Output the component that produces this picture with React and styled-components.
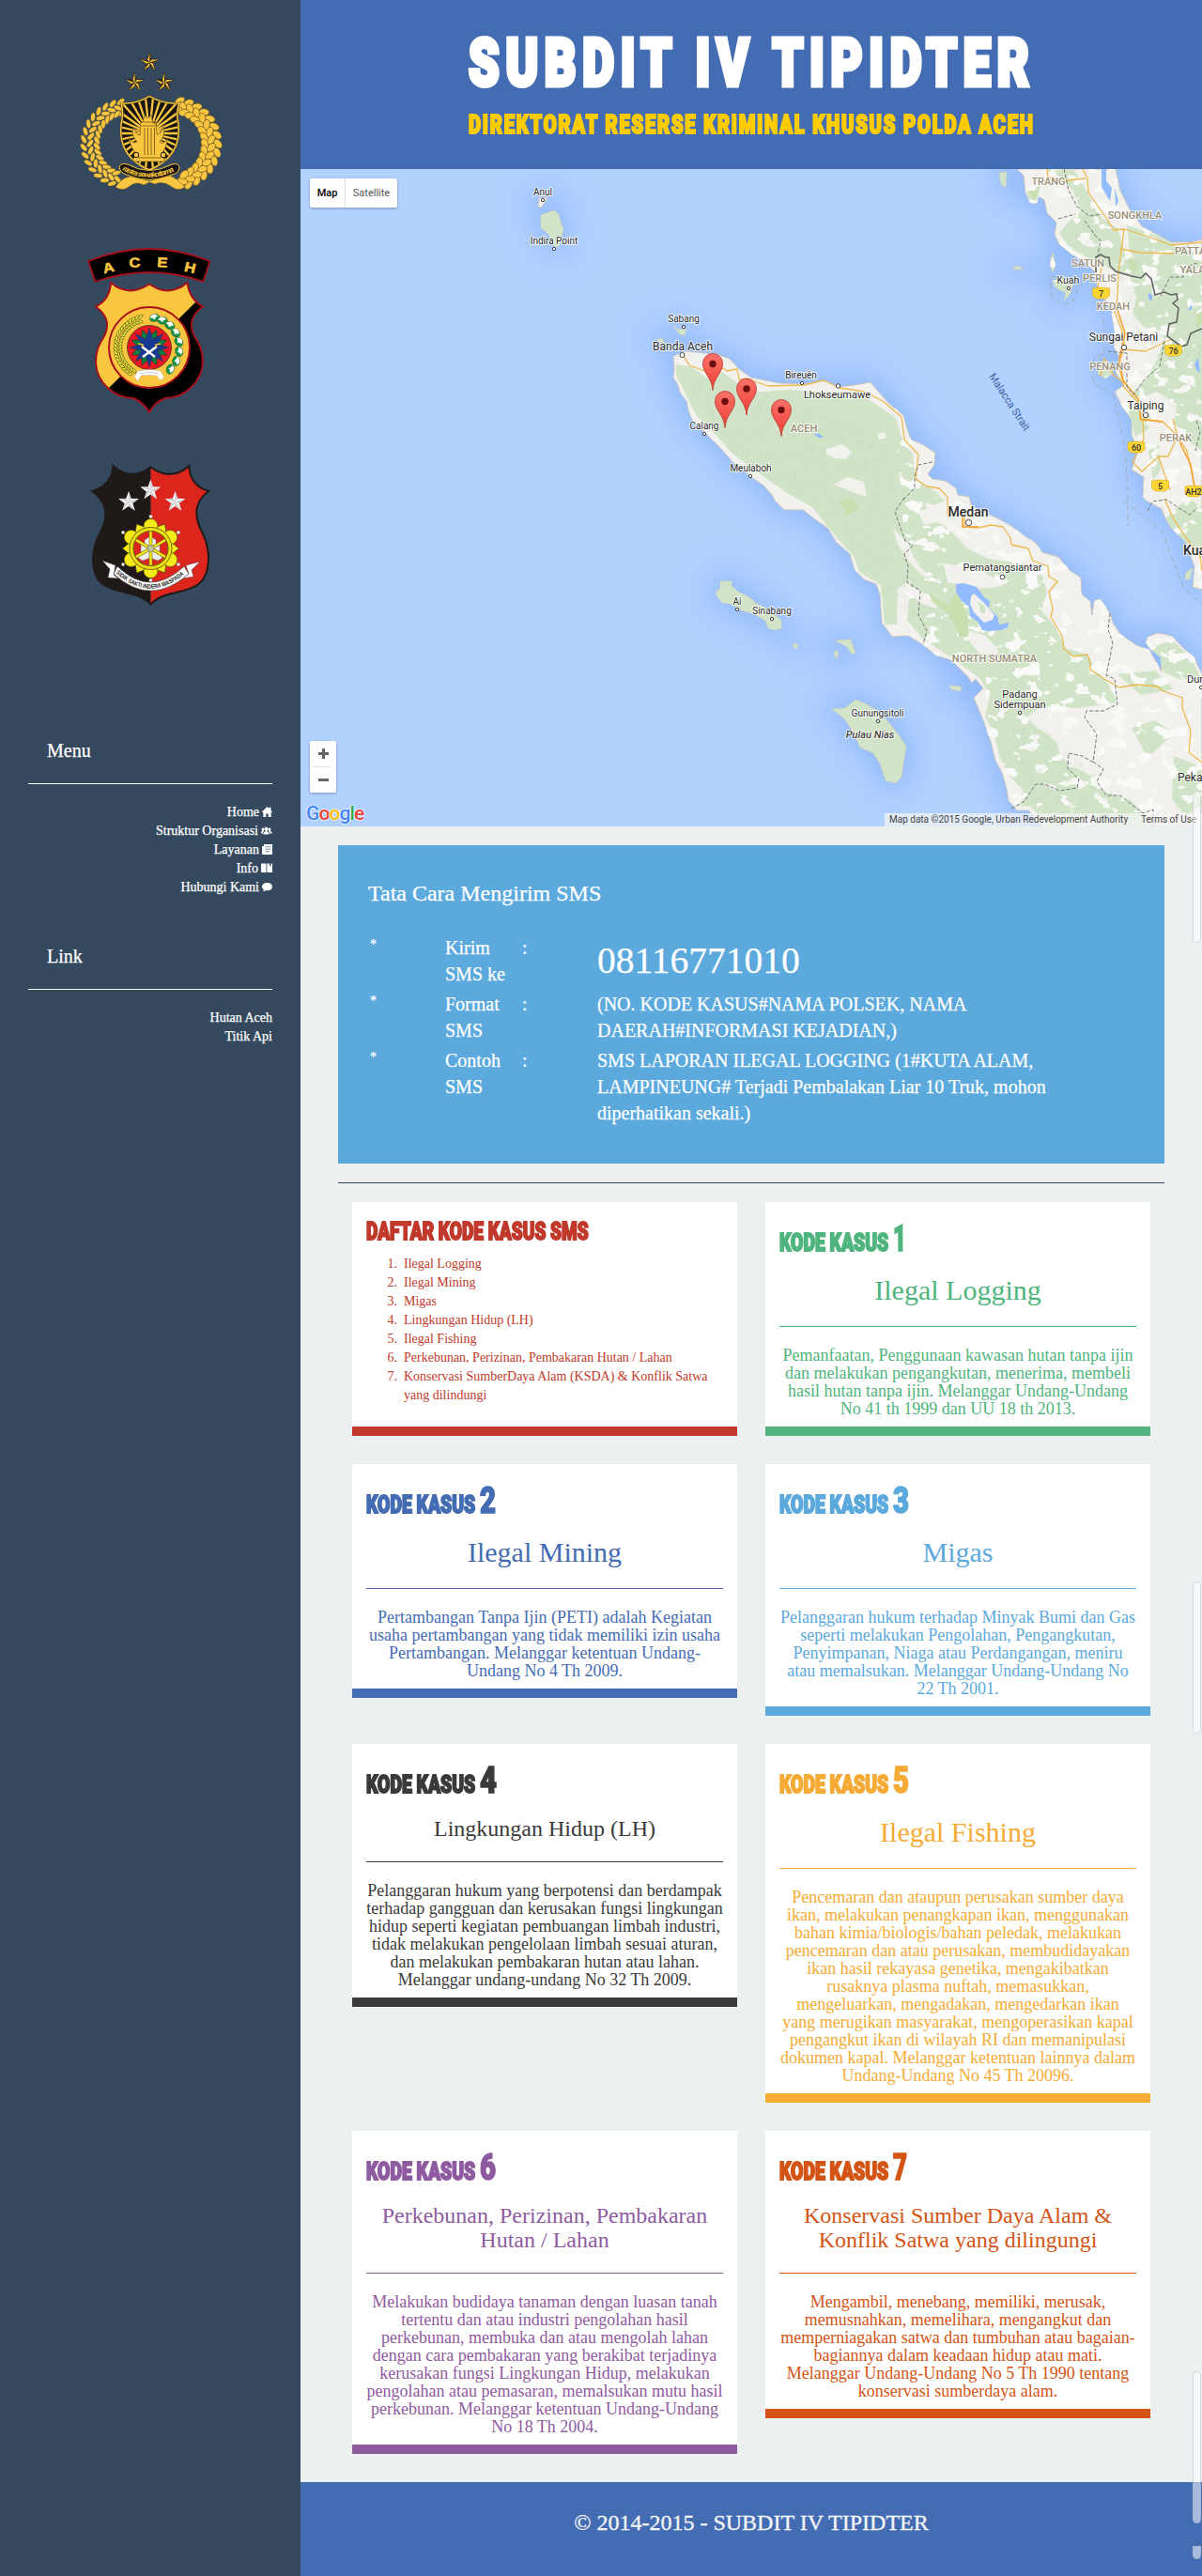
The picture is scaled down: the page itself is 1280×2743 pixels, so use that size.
import React, { useLayoutEffect, useRef, useState } from "react";
import styled, { createGlobalStyle } from "styled-components";

const serif = '"Liberation Serif", "Times New Roman", serif';
const sans = 'Roboto, "Liberation Sans", sans-serif';

const GlobalStyle = createGlobalStyle`
  * { box-sizing: border-box; }
  body { margin: 0; background: #ecf0f1; font-family: ${serif}; font-size: 14px; line-height: 20px; }
  h1, h2, h3, p, ol, ul { margin: 0; padding: 0; font-weight: 400; }
`;

/* ---------- page frame ---------- */
const Page = styled.div`
  position: relative;
  display: grid;
  grid-template-columns: 320px 960px;
  width: 1280px;
  height: 2743px;
  overflow: hidden;
`;
const Sidebar = styled.aside`
  background: #34495e;
  color: #fff;
  padding: 50px 30px 0;
`;
const Main = styled.main`
  display: flex;
  flex-direction: column;
  background: #ecf0f1;
`;

/* ---------- sidebar ---------- */
const Logos = styled.div`
  display: flex;
  flex-direction: column;
  align-items: center;
  height: 598px;
`;
const Crest = styled.svg`
  display: block;
  flex: none;
  width: ${(p) => p.$w}px;
  height: ${(p) => p.$h}px;
  margin-top: ${(p) => p.$gap || 0}px;
`;
const NavGroup = styled.nav`
  padding-top: ${(p) => p.$top}px;
`;
const NavTitle = styled.h2`
  font-size: 20px;
  line-height: 22px;
  padding-left: 20px;
  padding-bottom: 24px;
  border-bottom: 1px solid #fff;
  -webkit-text-stroke: 0.25px currentColor;
`;
const NavList = styled.ul`
  list-style: none;
  padding-top: ${(p) => p.$pad}px;
  text-align: right;
  -webkit-text-stroke: 0.25px currentColor;
`;
const NavItem = styled.li`
  display: flex;
  justify-content: flex-end;
  align-items: center;
  gap: 3px;
  height: 20px;
  line-height: 20px;
`;
const NavIcon = styled.svg`
  height: 11px;
  width: ${(p) => p.$w || 11}px;
  margin-bottom: 1px;
`;

/* ---------- header / footer ---------- */
const Header = styled.header`
  height: 180px;
  padding: 27px 0 0 179px;
  background: #446cb3;
`;
const FitBox = styled.span`
  display: block;
  width: ${(p) => p.$width}px;
  height: ${(p) => p.$line}px;
  line-height: ${(p) => p.$line}px;
  font-family: ${sans};
  font-weight: 900;
  font-size: ${(p) => p.$size}px;
  letter-spacing: ${(p) => p.$track || 0}px;
  color: ${(p) => p.$color || "inherit"};
  -webkit-text-stroke: ${(p) => p.$stroke || 0.8}px currentColor;
  white-space: nowrap;
`;
const FitInner = styled.span`
  display: inline-block;
  transform-origin: 0 50%;
`;
const Footer = styled.footer`
  height: 100px;
  margin-top: auto;
  padding-top: 23px;
  background: #446cb3;
  color: #f4f6f7;
  font-size: 24px;
  line-height: 40px;
  text-align: center;
  -webkit-text-stroke: 0.3px currentColor;
`;

function FitText({ children, ...box }) {
  const ref = useRef(null);
  const [scale, setScale] = useState(1);
  useLayoutEffect(() => {
    const natural = ref.current.offsetWidth - (box.$track || 0);
    setScale(box.$width / natural);
  }, [children, box.$width, box.$track]);
  return (
    <FitBox {...box}>
      <FitInner ref={ref} style={{ transform: `scaleX(${scale})` }}>{children}</FitInner>
    </FitBox>
  );
}

/* ---------- map ---------- */
const MapFrame = styled.section`
  position: relative;
  height: 700px;
  overflow: hidden;
  background: #b1d1ff;
  font-family: ${sans};
`;
const MapDrawing = styled.svg`
  display: block;
  width: 960px;
  height: 700px;
  font-family: ${sans};
`;
const MapTypes = styled.div`
  position: absolute;
  left: 10px;
  top: 10px;
  display: flex;
  height: 31px;
  background: #fff;
  border-radius: 2px;
  box-shadow: 0 1px 3px rgba(0, 0, 0, 0.3);
  font-size: 11px;
  line-height: 31px;
`;
const MapType = styled.span`
  width: ${(p) => p.$w}px;
  text-align: center;
  color: ${(p) => (p.$on ? "#000" : "#565656")};
  font-weight: ${(p) => (p.$on ? 500 : 400)};
  border-left: ${(p) => (p.$on ? 0 : 1)}px solid #e0e0e0;
`;
const ZoomControl = styled.div`
  position: absolute;
  left: 10px;
  top: 609px;
  width: 28px;
  height: 55px;
  background: #fff;
  border-radius: 2px;
  box-shadow: 0 1px 3px rgba(0, 0, 0, 0.3);
`;
const Google = styled.div`
  position: absolute;
  left: 6px;
  top: 674px;
  font: 500 21px/24px ${sans};
  letter-spacing: -0.9px;
  text-shadow: 0 0 2px #fff, 0 0 2px #fff, 0 0 1px #fff;
`;
const Tint = styled.span`
  color: ${(p) => p.$c};
`;
const Credits = styled.div`
  position: absolute;
  right: 0;
  bottom: 0;
  display: flex;
  height: 14px;
  width: 338px;
  background: rgba(245, 245, 245, 0.72);
  color: #444;
  font-size: 10px;
  line-height: 14px;
  white-space: nowrap;
`;
const Credit = styled.span`
  width: ${(p) => p.$w}px;
  padding-left: ${(p) => p.$pad}px;
`;

/* ---------- sms panel ---------- */
const Body = styled.div`
  padding: 20px 40px 0;
`;
const SmsPanel = styled.section`
  height: 339px;
  padding: 38px 32px 0;
  background: #5ba9dd;
  color: #fff;
  -webkit-text-stroke: 0.25px currentColor;
`;
const SmsTitle = styled.h2`
  font-size: 24px;
  line-height: 26px;
  margin-bottom: 31px;
`;
const SmsRow = styled.div`
  display: grid;
  grid-template-columns: 82px 82px 80px 500px;
  margin-top: ${(p) => (p.$first ? 0 : 4)}px;
  font-size: 20px;
  line-height: 28px;
`;
const Bullet = styled.span`
  padding-left: 2px;
  font-size: 14px;
  line-height: 22px;
`;
const Label = styled.span`
  width: 70px;
  white-space: pre-line;
`;
const Value = styled.span`
  font-size: ${(p) => (p.$big ? 39.5 : 20)}px;
  line-height: ${(p) => (p.$big ? 56 : 28)}px;
`;
const Rule = styled.div`
  height: 1px;
  margin: 20px 0;
  background: #34495e;
`;

/* ---------- cards ---------- */
const Cards = styled.div`
  display: grid;
  grid-template-columns: 410px 410px;
  gap: 30px;
  padding: 0 15px;
  align-items: start;
`;
const Card = styled.article`
  min-height: 249px;
  padding: 0 15px 9px;
  background: #fff;
  color: ${(p) => p.$color};
  border-bottom: 10px solid ${(p) => p.$color};
`;
const CardCode = styled.div`
  display: flex;
  gap: 5px;
  align-items: flex-end;
  height: 77px;
  padding-bottom: 18px;
`;
const CardTitle = styled.h3`
  font-size: ${(p) => (p.$small ? 24 : 30)}px;
  line-height: ${(p) => (p.$small ? 26 : 33)}px;
  text-align: center;
`;
const CardRule = styled.div`
  height: 1px;
  margin: 22px 0 21px;
  background: currentColor;
`;
const CardText = styled.p`
  font-size: 18px;
  line-height: 19px;
  text-align: center;
`;
const ListHead = styled.div`
  padding-top: 15px;
  height: 56px;
`;
const CodeList = styled.ol`
  padding-left: 40px;
  font-size: 14px;
  line-height: 20px;
`;
const CodeItem = styled.li`
  &::marker {
    content: counter(list-item) ".\\00a0\\00a0";
  }
`;
const ScrollThumb = styled.i`
  position: absolute;
  left: 1270px;
  top: ${(p) => p.$top}px;
  width: 9px;
  height: ${(p) => p.$h}px;
  border: 1px solid rgba(150, 160, 165, 0.35);
  border-radius: ${(p) => (p.$cut ? "0 0 5px 5px" : "5px")};
  background: rgba(255, 255, 255, 0.55);
`;

/* ---------- drawings ---------- */
const starPoints = (cx, cy, r, inner = 0.4, n = 5) =>
  Array.from({ length: n * 2 }, (_, i) => {
    const a = -Math.PI / 2 + (i * Math.PI) / n;
    const q = i % 2 ? r * inner : r;
    return `${(cx + q * Math.cos(a)).toFixed(2)},${(cy + q * Math.sin(a)).toFixed(2)}`;
  }).join(" ");

const halfStar = (cx, cy, r) =>
  Array.from({ length: 5 }, (_, k) => {
    const a = -Math.PI / 2 + (k * 2 * Math.PI) / 5;
    const b = a + Math.PI / 5;
    return `M${cx},${cy}L${cx + r * Math.cos(a)},${cy + r * Math.sin(a)}L${cx + r * 0.4 * Math.cos(b)},${cy + r * 0.4 * Math.sin(b)}Z`;
  }).join("");

function Leaves({ cx, cy, rows, from, to, n, l, w, fill, stroke, spread = 28, sw = 0.5 }) {
  const out = [];
  rows.forEach(([rx, ry, tilt], r) => {
    for (let i = 0; i < n; i++) {
      const deg = from + ((to - from) * (i + (r % 2) * 0.5)) / n;
      const a = (deg * Math.PI) / 180;
      const x = cx + rx * Math.cos(a);
      const y = cy + ry * Math.sin(a);
      out.push(
        <ellipse key={`${r}-${i}`} cx={x} cy={y} rx={l} ry={w} fill={fill} stroke={stroke} strokeWidth={sw}
          transform={`rotate(${deg + 90 + tilt * spread} ${x} ${y})`} />
      );
    }
  });
  return <g>{out}</g>;
}

const gold = "#fbc63f";

function PoliceCrest() {
  const shield = "M129,110 Q145,111 159,102.500 Q174,111 191,110 Q187,120 190,132 C193,158 178,173 159,181 C140,173 126,158 129,132 Q132,120 129,110Z";
  return (
    <Crest $w={160} $h={156} viewBox="80 50 160 156">
      {[[159.3, 66.500], [143.5, 88], [175, 88]].map(([x, y]) => (
        <g key={x}>
          <polygon points={starPoints(x, y, 11, 0.42)} fill="#1c1a17" />
          <polygon points={starPoints(x, y, 9.800, 0.38)} fill={gold} />
          <path d={halfStar(x, y, 9)} fill="#2a2416" />
        </g>
      ))}
      <Leaves cx={134} cy={153} rows={[[45, 45, -1], [38, 39, 1], [31, 33, -1]]} from={263} to={98} n={15} l={4.8} w={2.4} fill={gold} stroke="#4b4630" spread={34} />
      <Leaves cx={185} cy={153} rows={[[47, 46, -1], [40, 41, 1], [33, 35, -0.6]]} from={-82} to={82} n={14} l={5.600} w={3.600} fill={gold} stroke="#6d5a25" sw={0.7} spread={40} />
      <clipPath id="shieldClip"><path d={shield} /></clipPath>
      <path d={shield} fill="#171512" />
      <g clipPath="url(#shieldClip)" stroke={gold} strokeWidth="2.300">
        {Array.from({ length: 30 }, (_, i) => {
          const a = (i * 12 * Math.PI) / 180;
          return <line key={i} x1="159" y1="142" x2={159 + 50 * Math.cos(a)} y2={142 + 50 * Math.sin(a)} />;
        })}
      </g>
      <path d={shield} fill="none" stroke="#55491f" strokeWidth="2.400" />
      <path d={shield} fill="none" stroke={gold} strokeWidth="1.400" />
      <path d="M143,172 h32 v-3 l-4,-3 q6,-8 8,-19 q-6,8 -9,4 q7,-8 4,-16 q-3,9 -7,8 l-1,-13 q-3,6 -5,-8 q-4,7 -7,0 q-2,10 -4,8 l-1,14 q-4,0 -7,-9 q-3,9 4,16 q-3,3 -9,-4 q2,10 9,19 l-5,3z" fill={gold} stroke="#4b3d10" strokeWidth=".6" />
      <path d="M154,136V165M157.500,136V165M161,136V165M164.500,136V165M150,130h19M151,134h17M147,168h25" stroke="#6a5410" strokeWidth=".8" />
      <circle cx="145" cy="165" r="2.800" fill={gold} stroke="#171512" />
      <circle cx="174" cy="165" r="2.800" fill={gold} stroke="#171512" />
      <path d="M127,178 Q128,173 136,175 Q159,188 183,175 Q191,173 191,179 Q190,185 183,186 Q159,197 135,186 Q128,184 127,178Z" fill="#171512" stroke={gold} strokeWidth="1" />
      <path id="motto1" d="M130,181 Q159,197 190,180" fill="none" />
      <text fontFamily='"Liberation Sans", sans-serif' fontStyle="italic" fontSize="8" fontWeight="700" fill={gold}>
        <textPath href="#motto1" textLength="58">rastra sewakottama</textPath>
      </text>
      <path d="M123,199 Q131,188 139,188 Q150,190 159,193 Q168,190 181,187 Q189,190 197,199 Q190,204 183,199 Q173,192 165,196 L159,194 L153,197 Q145,192 137,199 Q130,204 123,199Z" fill={gold} stroke="#7b6425" strokeWidth=".5" />
    </Crest>
  );
}

function AcehCrest() {
  const shield = "M118,301 Q137,317 159,302.500 Q180,317 199.500,301 Q202,319 216,326.500 C203,336 201,346 207,358 C213,367 216,374 216,386 C215,408 195,424 176,424 Q165,428 159,439 Q152,428 142,424 C122,424 103,408 102,386 C102,374 105,367 111,358 C117,346 115,336 102,326.500 Q117,319 118,301Z";
  return (
    <Crest $w={140} $h={184} $gap={54} viewBox="90 260 140 184">
      <path d="M94,278 Q159,252 223.500,278 L216.500,300 Q159,280 101.500,300Z" fill="#000" stroke="#a5101c" strokeWidth="1.800" />
      {[["A", 115.500, 285, -13], ["C", 143.500, 279.500, -4], ["E", 173, 279.500, 4], ["H", 202.500, 285, 13]].map(([t, x, y, r]) => (
        <text key={t} transform={`translate(${x} ${y}) rotate(${r}) scale(1.150 1)`} y="5" textAnchor="middle" fontFamily='"Liberation Sans", sans-serif' fontSize="14.500" fontWeight="700" fill={gold} stroke={gold} strokeWidth=".5">{t}</text>
      ))}
      <clipPath id="acehClip"><path d={shield} /></clipPath>
      <g clipPath="url(#acehClip)">
        <rect x="95" y="295" width="130" height="150" fill={gold} />
        <path d="M208,322 L116,413 L116,445 H225 V315Z" fill="#000" />
      </g>
      <path d={shield} fill="none" stroke="#a5101c" strokeWidth="2" />
      <circle cx="159" cy="370" r="43" fill={gold} stroke="#a5101c" strokeWidth="2" />
      <Leaves cx={159} cy={370} rows={[[36, 34, -1], [31, 29, 1]]} from={255} to={118} n={21} l={3} w={1.300} fill="#f6f33a" stroke="#3d4517" sw={0.6} />
      {[-80, -64, -47, -29, -11, 8, 27, 46].map((d) => {
        const a = (d * Math.PI) / 180;
        const x = 159 + 32 * Math.cos(a);
        const y = 370 + 32 * Math.sin(a);
        return (
          <g key={d} transform={`rotate(${d + 65} ${x} ${y})`}>
            <ellipse cx={x} cy={y} rx="5.300" ry="4" fill="#159447" stroke="#16572f" strokeWidth=".5" />
            <path d={`M${x - 5},${y - 1} q5,-6 9,0 q-3,0 -4,3 q-2,-3 -5,-3z`} fill="#fff" />
          </g>
        );
      })}
      <circle cx="159" cy="370" r="23.500" fill="#ea1820" stroke="#3e3427" strokeWidth=".8" />
      <polygon points={starPoints(159, 370, 20.500, 0.58, 8)} fill="#087b43" stroke="#54191c" strokeWidth=".5" transform="rotate(22.500 159 370)" />
      <polygon points={starPoints(159, 370, 21, 0.45, 8)} fill="#17398f" stroke="#3e2744" strokeWidth=".5" />
      <path d="M151,369 L165,380 M167,369 L152,380" stroke="#fff" strokeWidth="2.400" />
      <path d="M147,366 l5,1 v3 M171,366 l-5,1 v3" stroke={gold} strokeWidth="1.500" fill="none" />
      <path d="M143,401 l4,-6 q12,-3 24,0 l4,7 l-5,3 l-3,-5 q-9,-1 -17,0 l-3,6z" fill="#fff" stroke="#b4aca0" strokeWidth=".5" />
      <path d="M149,398 q10,-3 20,0" stroke="#8a8a8a" strokeWidth=".8" strokeDasharray="1.500 1" fill="none" />
    </Crest>
  );
}

function ReserseCrest() {
  const shield = "M120.500,496 Q139,513 160.500,497.500 Q182,513 201.500,496 Q202,517 222,523 C208,534 207,546 212,560 C218,572 222,580 222,596 C221,640 180,622 160.500,643.500 C141,622 99,640 99,596 C99,580 105,572 110,560 C115,546 113,534 98,523 Q119,517 120.500,496Z";
  return (
    <Crest $w={140} $h={158} $gap={46} viewBox="90 490 140 158">
      <clipPath id="resClip"><path d={shield} /></clipPath>
      <g clipPath="url(#resClip)">
        <rect x="90" y="490" width="70.500" height="158" fill="#1f1a18" />
        <rect x="160.500" y="490" width="70" height="158" fill="#db251d" />
      </g>
      <path d={shield} fill="none" stroke="#211a18" strokeWidth="2" />
      {[[137, 534.500], [160.300, 522], [186.500, 534.500]].map(([x, y]) => (
        <g key={x}>
          <polygon points={starPoints(x, y, 11.500)} fill="#f6f6f6" />
          <path d={halfStar(x, y, 11)} fill="#c9c9c9" />
        </g>
      ))}
      {Array.from({ length: 6 }, (_, i) => {
        const a = ((i * 60 - 90) * Math.PI) / 180;
        return <circle key={i} cx={160.500 + 34 * Math.cos(a)} cy={584 + 34 * Math.sin(a)} r="1.800" fill="#fff" stroke="#777" strokeWidth=".4" />;
      })}
      <polygon points={starPoints(160.500, 584, 30, 0.78, 12)} fill="#f5ea18" stroke="#514d0c" strokeWidth=".8" />
      {Array.from({ length: 6 }, (_, i) => {
        const a = ((i * 60 - 90) * Math.PI) / 180;
        return <circle key={i} cx={160.500 + 24 * Math.cos(a)} cy={584 + 24 * Math.sin(a)} r="7.500" fill="#f5ea18" stroke="#514d0c" strokeWidth=".6" />;
      })}
      <circle cx="160.500" cy="584" r="22.500" fill="#eedf12" stroke="#6d6712" />
      <circle cx="160.500" cy="584" r="18.500" fill="#db251d" stroke="#6d6712" strokeWidth="1.200" />
      <path d="M150,590 v-10 h4 v-5 l6,-4 6,4 v5 h4 v10 l3,4 -5,3 -8,-3 -8,3 -5,-3z" fill="#eee" stroke="#777" strokeWidth=".5" />
      {Array.from({ length: 6 }, (_, i) => {
        const a = Math.PI / 2 + (i * Math.PI) / 3;
        return (
          <g key={i}>
            <line x1="160.500" y1="584" x2={160.500 + 18 * Math.cos(a)} y2={584 + 18 * Math.sin(a)} stroke="#6d6712" strokeWidth="3.600" />
            <line x1="160.500" y1="584" x2={160.500 + 18 * Math.cos(a)} y2={584 + 18 * Math.sin(a)} stroke="#f5ea18" strokeWidth="2.400" />
          </g>
        );
      })}
      <circle cx="160.500" cy="584" r="3.500" fill="#c4c29b" stroke="#666" strokeWidth=".6" />
      <path d="M109,597 L123,602 L121,612 L126,616 L115,615 L117,606Z M213,598 L198,602 L201,611 L194,616 L206,614 L204,607Z" fill="#fff" stroke="#444" strokeWidth=".5" />
      <path d="M125,603 Q160,637 196,603 L201,611 Q160,647 121,611Z" fill="#fff" stroke="#333" strokeWidth=".6" />
      <path id="motto2" d="M123.500,610 Q160,644 199,609" fill="none" />
      <text fontFamily='"Liberation Sans", sans-serif' fontSize="6.500" fontWeight="700" fill="#222">
        <textPath href="#motto2" textLength="81" lengthAdjust="spacingAndGlyphs">SIDIK SAKTI INDERA WASPADA</textPath>
      </text>
    </Crest>
  );
}

/* ---------- map data ---------- */
const sumatra = "M717,379 L730,374 763,377 777,382 787,393 800,402 830,408 857,409 877,405 893,412 910,410 927,407 938,420 947,430 962,442 966,456 970,468 982,473 996,482 995,495 988,505 993,510 1007,512 1018,520 1020,527 1032,529 1034,537 1040,542 1063,552 1077,560 1090,570 1103,578 1110,588 1127,593 1140,608 1151,615 1152,633 1161,640 1163,655 1165,640 1172,638 1182,653 1185,663 1193,675 1210,687 1224,692 1237,715 1236,700 1224,690 1220,684 1222,678 1233,674 1248,677 1260,690 1272,700 1275,708 1280,717 1280,880 1110,880 1103,873 1095,863 1083,863 1074,853 1072,840 1067,823 1060,810 1055,790 1048,770 1043,757 1037,743 1047,733 1039,723 1035,727 1030,720 1013,703 997,698 982,686 967,677 950,678 939,663 937,633 933,622 920,617 910,607 905,590 890,577 882,563 868,553 855,543 835,543 825,533 822,527 813,517 800,508 787,497 780,492 768,478 757,467 745,455 737,447 733,437 731,427 724,418 722,410 717,402 718,393Z";
const malay = "M1083,180 L1090,187 1092,205 1097,216 1104,217 1106,209 1112,213 1115,227 1125,237 1123,250 1128,260 1143,272 1157,280 1166,290 1168,303 1175,317 1183,330 1187,353 1186,370 1192,380 1188,397 1197,410 1187,417 1195,433 1205,447 1205,463 1212,480 1205,500 1218,508 1217,529 1220,533 1237,542 1240,550 1247,562 1263,578 1267,590 1272,603 1270,625 1280,628 1280,255 1267,258 1247,258 1233,250 1217,242 1203,223 1193,203 1188,180Z";
const isles = [
  "M574,211 L583,210 580,216 576,221 573,220Z",
  "M576,229 L590,224 595,228 597,237 600,244 598,252 596,262 591,263 584,249 576,243Z",
  "M716,346 L722,351 731,351 729,357 724,356Z",
  "M699,362 L705,360 708,366 704,365Z",
  "M762,631 L767,626 767,619 779,619 779,624 786,630 798,636 806,643 815,647 825,655 832,660 832,669 826,671 818,669 815,661 803,654 790,650 778,643 769,642 763,634Z",
  "M889,682 L906,681 911,696 907,696 901,688Z", "M888,695 l3,-3 2,6 -3,3z", "M845,685 l4,1 0,4 -4,0z",
  "M1011,730 L1023,731 1023,736 1013,734Z",
  "M886,755 L900,754 911,745 921,749 935,757 948,771 958,784 965,795 962,813 960,827 954,834 943,831 937,813 930,802 916,796 909,780 899,765Z",
  "M1064,184 L1072,183 1071,200 1066,196Z", "M1118,281 l3,-12 3,13 -3,8z", "M1078,286 l5,-3 7,4 -6,0z",
  "M1121,299 l10,-3 12,6 -4,12 -6,6 2,-8 -6,-3 -6,-4z",
  "M1170,390 l8,-6 6,4 1,10 -8,5 -8,-5z",
  "M1263,610 l7,-5 -3,12 -5,0z",
];
const greens = [
  "M720,388 L735,390 752,402 769,396 785,408 800,418 840,415 893,419 920,422 941,436 954,445 960,466 972,484 974,500 978,513 996,523 1006,533 978,545 984,559 1002,555 1030,584 1052,595 1088,600 1111,614 1115,631 1109,650 1124,668 1134,690 1158,697 1167,713 1180,728 1190,748 1148,754 1108,752 1092,765 1124,789 1130,806 1150,820 1168,830 1178,844 1204,852 1224,872 1218,880 1116,880 1098,859 1082,858 1090,842 1072,823 1064,805 1059,783 1049,763 1054,740 1043,722 1013,700 983,681 966,660 968,636 970,618 956,627 955,665 942,665 938,623 915,609 909,592 894,576 875,553 865,540 838,525 800,498 780,483 764,465 741,442 730,419 720,400Z",
  "M1110,180 L1143,180 1162,212 1173,232 1190,243 1198,270 1222,282 1215,296 1190,290 1165,278 1140,265 1128,248 1139,235 1151,225 1143,203 1127,187Z",
  "M1200,240 L1228,249 1250,259 1280,274 1280,480 1265,470 1250,455 1253,430 1232,417 1210,425 1202,422 1221,404 1232,384 1240,360 1218,348 1206,334 1210,316 1203,292 1216,290 1203,266Z",
  "M1093,199 l15,-2 -4,18 -9,-4z M1199,428 l14,0 12,15 -2,14 -14,8z M1223,480 l11,-6 2,26 -8,12z",
  "M1233,560 l32,-30 15,10 0,55 -12,-14z M1225,690 L1249,682 1268,700 1278,720 1258,724 1240,716Z",
  "M1190,718 l40,-4 20,20 -35,6z M1205,775 l25,-8 20,14 -28,26z M1250,805 l30,12 0,40 -18,12 -14,-18z",
];
const pale = [
  "M880,478 l17,-5 10,8 -6,8 -12,-1 -9,-5z", "M888,516 l14,-8 18,5 3,16 -12,-4z", "M934,462 l8,-2 2,6 -8,2z",
  "M951,562 L967,580 978,602 992,616 983,613 968,598 956,580Z", "M1032,672 l16,4 14,14 0,9 -20,-4 -11,-14z",
  "M965,624 l15,5 12,10 8,4 -3,5 -18,-6z", "M1005,600 l40,6 24,18 -30,3 -30,-7z",
  "M1130,625 l20,3 6,18 -18,-8z M1122,640 l24,12 10,14 -14,-4z M1130,665 l22,5 10,18 -18,-8z",
  "M985,535 l18,5 4,20 -18,-8z",
];
const roads = [
  "M728,379 L734,389 750,395 770,392 774,395 785,393 787,404 800,405 818,411 857,410 877,405 894,413 920,417 940,427 960,444 963,468 978,484 975,510 987,518 1000,520 1009,529",
  "M1009,529 V548 L1027,549 1027,561 1042,562 1055,559 1068,561 1076,573 1077,580 1095,584 1100,597 1116,603 1117,614 1126,619 1117,630 1121,648 1119,657 1131,677 1133,691 1143,699 1158,697 1161,706 1161,713 1176,723 1192,732 1210,729 1233,731 1239,736 1259,743 1259,754 1268,778 1266,801 1280,812",
  "M1153,180 L1158,190 1159,205 1178,232 1186,245 1197,244 1191,290 1190,317 1187,332 1197,358 1197,371 1191,388 1197,412 1213,430 1214,447 1238,449 1252,462 1264,480 1272,517",
  "M1197,244 L1220,251 1247,261 1280,258 M1193,265 L1215,269 1250,270 M1197,372 L1220,374 1248,361",
  "M1115,180 l1,9 20,3 20,-2 M1173,285 l-4,20 2,12",
  "M1217,447 l1,20 -12,25 10,10 18,-16 10,0 10,-22 -5,-18 M1234,487 l12,35 M1240,531 l10,22 15,22 13,18 2,15",
  "M1172,400 l4,-18 10,18 12,8",
];
const labels = [
  ["Anul", 578, 208, 10], ["Indira Point", 590, 260, 10], ["Sabang", 728, 343, 10], ["Banda Aceh", 727, 373, 12],
  ["Calang", 750, 457, 10], ["Meulaboh", 799.500, 502, 10], ["Bireuën", 853, 403, 10], ["Lhokseumawe", 891.500, 424, 11],
  ["Kuah", 1137.500, 302, 10.500], ["Sungai Petani", 1196.500, 363, 12], ["Taiping", 1220, 436, 12],
  ["Ai", 785, 644, 10], ["Sinabang", 822, 654, 10], ["Medan", 1031, 549.500, 14, 500], ["Pematangsiantar", 1067.500, 608, 11],
  ["Padang", 1086, 743, 11], ["Sidempuan", 1086, 754, 11], ["Gunungsitoli", 934.500, 763, 10],
];
const regions = [
  ["TRANG", 1116.500, 197], ["SONGKHLA", 1208.500, 232.500], ["SATUN", 1158.500, 283.500], ["PERLIS", 1171, 299.500],
  ["KEDAH", 1185.500, 329.500], ["PENANG", 1182, 394], ["PERAK", 1252, 469.500], ["ACEH", 856, 459.500], ["NORTH SUMATRA", 1059, 704.500],
];
const clipped = [["PATTA", 1251, 270.500, 1], ["YALA", 1256.500, 290.500, 1], ["Kua", 1260, 590.500, 0, 14], ["Dur", 1264, 727, 0, 11], ["Peka", 1254, 832, 0, 12]];
const towns = [[578, 213], [590, 265], [728, 348], [726.500, 378, 2.500], [750, 462], [799, 507], [854, 408], [892.500, 411, 2.200], [1138, 307], [1197, 370, 2.700], [1220, 442, 2.700], [785, 649], [822, 659], [1031.500, 556.500, 3.200], [1067.500, 614.500, 2.300], [1086, 759], [935, 768], [1279, 732]];
const shields = [["7", 1172.500, 312], ["76", 1249.500, 373], ["60", 1210, 476], ["5", 1235.500, 517], ["AH2", 1271, 523]];
const pins = [[759, 415.500], [795, 442], [772, 455.500], [832, 464.500]];

function MapCanvas() {
  const coast = sumatra + malay + isles.join("");
  return (
    <MapDrawing viewBox="320 180 960 700">
      <defs>
        <filter id="deep" x="320" y="180" width="960" height="700" filterUnits="userSpaceOnUse"><feGaussianBlur stdDeviation="15" /></filter>
        <filter id="patches" x="320" y="180" width="960" height="700" filterUnits="userSpaceOnUse">
          <feTurbulence type="fractalNoise" baseFrequency=".055 .075" numOctaves="3" seed="8" />
          <feColorMatrix values="0 0 0 0 .949  0 0 0 0 .945  0 0 0 0 .929  22 0 0 0 -12.800" />
          <feComposite in2="SourceGraphic" operator="in" />
        </filter>
        <filter id="relief" x="320" y="180" width="960" height="700" filterUnits="userSpaceOnUse">
          <feTurbulence type="fractalNoise" baseFrequency=".16" numOctaves="3" seed="3" />
          <feColorMatrix values="0 0 0 0 .58  0 0 0 0 .69  0 0 0 0 .54  3 0 0 0 -1.500" />
          <feComposite in2="SourceGraphic" operator="in" />
        </filter>
        <clipPath id="land"><path d={coast} /></clipPath>
        <linearGradient id="pinFill" x1="0" y1="0" x2="0" y2="1"><stop offset="0" stopColor="#fb7267" /><stop offset="1" stopColor="#ee3f36" /></linearGradient>
      </defs>
      <rect x="320" y="180" width="960" height="700" fill="#b1d1ff" />
      <path d={coast} fill="#7faaf8" stroke="#7faaf8" strokeWidth="15" filter="url(#deep)" opacity=".62" />
      <path d={coast} fill="#f2f1ed" stroke="#c5c6c3" strokeWidth="1" />
      <g clipPath="url(#land)">
        {greens.map((d, i) => <path key={i} d={d} fill="#d1e4c8" />)}
        <path d={isles.slice(1).join("")} fill="#d1e4c8" />
        <path d="M950,400 L1012,530 1280,640 V880 H1050 V700 H960 L965,600Z" fill="#fff" filter="url(#patches)" />
        <path d="M1083,180 H1280 V640 H1180Z" fill="#fff" filter="url(#patches)" />
        <path d="M722,398 L850,425 950,470 960,600 1000,655 1000,670 960,650 930,615 870,540 780,485Z M1180,270 L1280,290 V450 L1240,430Z M1130,240 L1180,240 1200,275 1170,270Z M1060,730 L1130,790 1200,860 1100,860Z" fill="#fff" filter="url(#relief)" opacity=".4" />
        {pale.map((d, i) => <path key={i} d={d} fill="#f2f1ed" />)}
        <path d="M990,633 L1010,644 1018,632 1024,640 1032,660 1030,678 1022,678 1010,654 992,640Z M893,534 l14,-4 8,12 -13,6z M1202,275 l10,5 -4,10 -6,-3z M1095,203 l11,0 -5,10z M1274,335 l6,-4 0,12 -5,8z" fill="#c9dfaf" />
      </g>
      <g fill="#93bbff">
        <path d="M1018,622 L1026,621 1040,625 1048,636 1054,640 1053,648 1062,656 1064,665 1074,663 1073,668 1066,671 1052,672 1046,671 1041,662 1033,656 1032,646 1024,640 1018,630Z" />
        <path d="M866,462 l6,0 6,4 -6,0z M1173,180 l5,0 0,13 6,7 -2,14 -9,-15z M1187,200 l4,14 -3,6z M1223,312 l4,2 0,7 -4,-3z M1272,387 l4,-6 2,16 -4,-3z M1265,330 l4,-6 0,6z" />
      </g>
      <path d="M1034,635 L1037,632 1048,642 1059,655 1057,660 1048,663 1037,652 1033,643Z" fill="#f2f1ed" /><path d="M1041,640 l8,6 0,7 -4,0z" fill="#d1e4c8" />
      <g fill="none" stroke="#edba50" strokeWidth="1.300" strokeLinejoin="round">{roads.map((d) => <path key={d} d={d} />)}</g>
      <path d="M1190,330 L1198,355 1192,382 1196,405 1212,425 1215,446 1238,449 M1252,462 L1268,495 1272,518 M1025,548 V561 H1042" fill="none" stroke="#f6a12d" strokeWidth="1.500" />
      <g fill="none" stroke="#777" strokeWidth="1" strokeDasharray="4 2">
        <path d="M963,530 L953,545 964,576 972,581 963,590 967,603 966,620 980,629 978,655 987,672 983,686 M993,492 L978,495 974,507 974,520 962,532" />
        <path d="M1182,653 L1180,670 1185,685 1178,719 1187,723 1190,750 1175,757 1157,757 1155,764 1168,782 1164,811 1175,819 1168,832 1178,847 1193,847 1217,866 1228,862 1228,880" />
        <path d="M1077,861 L1091,853 1103,835 1113,835 1128,842 1147,839 1149,830 1137,818 1138,802 1152,805 1165,812" />
        <path d="M1133,180 L1138,203 1147,220 1160,230 1173,228 M1127,233 L1145,228 M1155,235 L1168,253 1172,256 1169,272 M1240,363 L1235,390 1220,403 1207,420 1200,412 V376 L1180,374" />
        <path d="M1222,544 l5,-10 15,-2 15,10 10,6 8,-7 M1274,448 l4,12 -5,20 M1266,262 l-18,4 M1275,280 l-15,5 0,10 -14,0 -10,20" />
      </g>
      <path d="M1172,319 l4,30 0,28 -10,3 -5,16 5,13 20,12 12,56 3,45 0,38 M1197,533 l40,32 12,32 12,30 19,16 M1119,295 l18,-3 13,10 -8,20 -12,2 -10,-7z" fill="none" stroke="#a9aeb5" strokeDasharray="6 4" />
      <path d="M1167,290 L1167,274 1172,271 1177,274 1181,274 1182,283 1188,289 1205,294 1215,296 1220,291 1226,297 1230,314 1240,311 1247,314 1253,313 1254,319 1249,323 1255,328 1253,343 1245,345 1243,358 1258,369 1264,367 1268,355 1280,350" fill="none" stroke="#626262" strokeWidth="1.600" />

      {towns.map(([x, y, r = 1.700]) => <circle key={`${x}-${y}`} cx={x} cy={y} r={r} fill="#fff" stroke="#444" strokeWidth="1" />)}
      <g textAnchor="middle" paintOrder="stroke" stroke="#fff" strokeOpacity=".8" strokeWidth="2" strokeLinejoin="round">
        {labels.map(([t, x, y, s, w]) => <text key={t} x={x} y={y} fontSize={s} fontWeight={w || 400} fill="#2b2b2b">{t}</text>)}
        {regions.map(([t, x, y]) => <text key={t} x={x} y={y} fontSize="11" fontWeight="500" fill="#9b8e77">{t}</text>)}
        <text x="926.500" y="785.500" fontSize="11" fontStyle="italic" fontWeight="500" fill="#4b463c">Pulau Nias</text>
      </g>
      <g paintOrder="stroke" stroke="#fff" strokeOpacity=".8" strokeWidth="2" strokeLinejoin="round">
        {clipped.map(([t, x, y, g, s]) => <text key={t} x={x} y={y} fontSize={s || 11} fontWeight={s === 14 || g ? 500 : 400} fill={g ? "#9b8e77" : "#2b2b2b"}>{t}</text>)}
      </g>
      <text transform="translate(1072 430) rotate(57)" textAnchor="middle" fontSize="11" fill="#40639f">Malacca Strait</text>
      {shields.map(([t, x, y]) => (
        <g key={t}>
          <path d={`M${x - 9},${y - 5} q9,-2 18,0 v8 l-4,3 h-10 l-4,-3z`} fill="#fbd633" stroke="#d6ac23" strokeWidth=".6" />
          <text x={x} y={y + 3.500} textAnchor="middle" fontSize="9" fontWeight="500" fill="#333">{t}</text>
        </g>
      ))}
      {pins.map(([x, y]) => (
        <g key={x} transform={`translate(${x} ${y})`}>
          <path d="M0,0 C-1,-14 -10.500,-18 -10.500,-28.500 A10.500,10.500 0 0 1 10.500,-28.500 C10.500,-18 1,-14 0,0Z" fill="url(#pinFill)" stroke="#b8352e" strokeWidth=".8" />
          <circle cx="0" cy="-28" r="3.700" fill="#6b0f10" />
        </g>
      ))}
    </MapDrawing>
  );
}

/* ---------- menu icons ---------- */
const icons = {
  home: <path d="M0,5.500 L5.500,0 L7.500,2 V.8 H9.500 V4 L11,5.500 V6 H9.700 V11 H6.700 V7.500 H4.300 V11 H1.300 V6 H0Z" />,
  people: <path d="M5.500,1.500 a1.800,2.200 0 0 1 1,4 V6.500 L8.500,7.500 V9.500 H2.500 V7.500 L4.500,6.500 V5.500 a1.800,2.200 0 0 1 1,-4Z M2,2.500 a1.300,1.600 0 0 1 .8,3 V6.200 L1.800,7.200 V8.500 H-.5 V7 L1,6.200 V5.200 a1.300,1.600 0 0 1 1,-2.700Z M9,2.500 a1.300,1.600 0 0 1 1,2.700 V6.200 L11.500,7 V8.500 H9.200 V7.200 L8.200,6.200 V5.500 a1.300,1.600 0 0 1 .8,-3Z" />,
  news: <><path d="M2,0 H11 V10 Q11,11 10,11 H1 Q0,11 0,10 V2 H2Z" /><path d="M3.500,2.700 H9.500 M3.500,5.200 H9.500 M3.500,7.700 H8" stroke="#7d8a98" /></>,
  book: <><path d="M0,.5 H5.500 V10 H0Z M6.300,.5 H12 V10 H6.300Z" /><path d="M9,0 h1.500 v3.500 l-.8,-.8 -.7,.8z" fill="#34495e" /></>,
  chat: <path d="M5.500,1 C8.800,1 11,3 11,5.200 C11,7.500 8.800,9.300 5.500,9.300 Q4.800,9.300 4,9.100 Q2.800,10.300 1,10 Q2,9 1.900,8.200 Q0,7 0,5.200 C0,3 2.200,1 5.500,1Z" />,
};
const menu = [["Home", "home", 11], ["Struktur Organisasi", "people", 12], ["Layanan", "news", 11], ["Info", "book", 12], ["Hubungi Kami", "chat", 11]];

const sms = [
  ["Kirim\nSMS ke", "08116771010", true],
  ["Format\nSMS", "(NO. KODE KASUS#NAMA POLSEK, NAMA DAERAH#INFORMASI KEJADIAN,)"],
  ["Contoh\nSMS", "SMS LAPORAN ILEGAL LOGGING (1#KUTA ALAM, LAMPINEUNG# Terjadi Pembalakan Liar 10 Truk, mohon diperhatikan sekali.)"],
];
const codes = ["Ilegal Logging", "Ilegal Mining", "Migas", "Lingkungan Hidup (LH)", "Ilegal Fishing", "Perkebunan, Perizinan, Pembakaran Hutan / Lahan", "Konservasi SumberDaya Alam (KSDA) & Konflik Satwa yang dilindungi"];
const cases = [
  { n: "1", w: 14, color: "#4fb47d", title: "Ilegal Logging", text: "Pemanfaatan, Penggunaan kawasan hutan tanpa ijin dan melakukan pengangkutan, menerima, membeli hasil hutan tanpa ijin. Melanggar Undang-Undang No 41 th 1999 dan UU 18 th 2013." },
  { n: "2", w: 17, color: "#446cb3", title: "Ilegal Mining", text: "Pertambangan Tanpa Ijin (PETI) adalah Kegiatan usaha pertambangan yang tidak memiliki izin usaha Pertambangan. Melanggar ketentuan Undang-Undang No 4 Th 2009." },
  { n: "3", w: 17, color: "#5ba9dd", title: "Migas", text: "Pelanggaran hukum terhadap Minyak Bumi dan Gas seperti melakukan Pengolahan, Pengangkutan, Penyimpanan, Niaga atau Perdangangan, meniru atau memalsukan. Melanggar Undang-Undang No 22 Th 2001." },
  { n: "4", w: 18, color: "#3a3a3a", small: true, title: "Lingkungan Hidup (LH)", text: "Pelanggaran hukum yang berpotensi dan berdampak terhadap gangguan dan kerusakan fungsi lingkungan hidup seperti kegiatan pembuangan limbah industri, tidak melakukan pengelolaan limbah sesuai aturan, dan melakukan pembakaran hutan atau lahan. Melanggar undang-undang No 32 Th 2009." },
  { n: "5", w: 17, color: "#f5ab35", title: "Ilegal Fishing", text: "Pencemaran dan ataupun perusakan sumber daya ikan, melakukan penangkapan ikan, menggunakan bahan kimia/biologis/bahan peledak, melakukan pencemaran dan atau perusakan, membudidayakan ikan hasil rekayasa genetika, mengakibatkan rusaknya plasma nuftah, memasukkan, mengeluarkan, mengadakan, mengedarkan ikan yang merugikan masyarakat, mengoperasikan kapal pengangkut ikan di wilayah RI dan memanipulasi dokumen kapal. Melanggar ketentuan lainnya dalam Undang-Undang No 45 Th 20096." },
  { n: "6", w: 17, color: "#8f5ba0", small: true, title: "Perkebunan, Perizinan, Pembakaran Hutan / Lahan", text: "Melakukan budidaya tanaman dengan luasan tanah tertentu dan atau industri pengolahan hasil perkebunan, membuka dan atau mengolah lahan dengan cara pembakaran yang berakibat terjadinya kerusakan fungsi Lingkungan Hidup, melakukan pengolahan atau pemasaran, memalsukan mutu hasil perkebunan. Melanggar ketentuan Undang-Undang No 18 Th 2004." },
  { n: "7", w: 15, color: "#d35414", small: true, title: "Konservasi Sumber Daya Alam & Konflik Satwa yang dilingungi", text: "Mengambil, menebang, memiliki, merusak, memusnahkan, memelihara, mengangkut dan memperniagakan satwa dan tumbuhan atau bagaian-bagiannya dalam keadaan hidup atau mati. Melanggar Undang-Undang No 5 Th 1990 tentang konservasi sumberdaya alam." },
];

export default function App() {
  return (
    <Page>
      <GlobalStyle />
      <Sidebar>
        <Logos>
          <PoliceCrest />
          <AcehCrest />
          <ReserseCrest />
        </Logos>
        <NavGroup $top={140}>
          <NavTitle>Menu</NavTitle>
          <NavList $pad={20}>
            {menu.map(([t, icon, w]) => (
              <NavItem key={t}>{t}<NavIcon $w={w} viewBox={`0 0 ${w} 11`} fill="#fff">{icons[icon]}</NavIcon></NavItem>
            ))}
          </NavList>
        </NavGroup>
        <NavGroup $top={52}>
          <NavTitle>Link</NavTitle>
          <NavList $pad={20}>
            <NavItem>Hutan Aceh</NavItem>
            <NavItem>Titik Api</NavItem>
          </NavList>
        </NavGroup>
      </Sidebar>

      <Main>
        <Header>
          <h1><FitText $width={597} $size={70} $line={80} $track={9} $stroke={5} $color="#fff">SUBDIT IV TIPIDTER</FitText></h1>
          <h2><FitText $width={601} $size={27} $line={52} $track={2.4} $stroke={2.2} $color="#ffcc00">DIREKTORAT RESERSE KRIMINAL KHUSUS POLDA ACEH</FitText></h2>
        </Header>

        <MapFrame>
          <MapCanvas />
          <MapTypes><MapType $w={37} $on>Map</MapType><MapType $w={56}>Satellite</MapType></MapTypes>
          <ZoomControl>
            <svg width="28" height="55"><path d="M9,13.500H20M14.500,8V19M9,41.500H20" stroke="#666" strokeWidth="3" /><path d="M4,27.500H23" stroke="#e2e2e2" /></svg>
          </ZoomControl>
          <Google><Tint $c="#4285f4">G</Tint><Tint $c="#ea4335">o</Tint><Tint $c="#fbbc05">o</Tint><Tint $c="#4285f4">g</Tint><Tint $c="#34a853">l</Tint><Tint $c="#ea4335">e</Tint></Google>
          <Credits><Credit $w={266} $pad={5}>Map data ©2015 Google, Urban Redevelopment Authority</Credit><Credit $w={72} $pad={7}>Terms of Use</Credit></Credits>
        </MapFrame>

        <Body>
          <SmsPanel>
            <SmsTitle>Tata Cara Mengirim SMS</SmsTitle>
            {sms.map(([label, value, big], i) => (
              <SmsRow key={label} $first={i === 0}>
                <Bullet>*</Bullet><Label>{label}</Label><span>:</span><Value $big={big}>{value}</Value>
              </SmsRow>
            ))}
          </SmsPanel>
          <Rule />
          <Cards>
            <Card $color="#c0392b">
              <ListHead><FitText $width={237} $size={25.5} $line={32} $stroke={1.9}>DAFTAR KODE KASUS SMS</FitText></ListHead>
              <CodeList>{codes.map((c) => <CodeItem key={c}>{c}</CodeItem>)}</CodeList>
            </Card>
            {cases.map((c) => (
              <Card key={c.n} $color={c.color}>
                <CardCode>
                  <FitText $width={116} $size={25.5} $line={32} $stroke={1.9}>KODE KASUS</FitText>
                  <FitText $width={c.w} $size={38} $line={40} $stroke={1.6}>{c.n}</FitText>
                </CardCode>
                <CardTitle $small={c.small}>{c.title}</CardTitle>
                <CardRule />
                <CardText>{c.text}</CardText>
              </Card>
            ))}
          </Cards>
        </Body>
        <Footer>© 2014-2015 - SUBDIT IV TIPIDTER</Footer>
      </Main>
      <ScrollThumb $top={842} $h={162} />
      <ScrollThumb $top={1684} $h={162} />
      <ScrollThumb $top={2525} $h={162} />
      <ScrollThumb $top={2711} $h={14} $cut />
    </Page>
  );
}
